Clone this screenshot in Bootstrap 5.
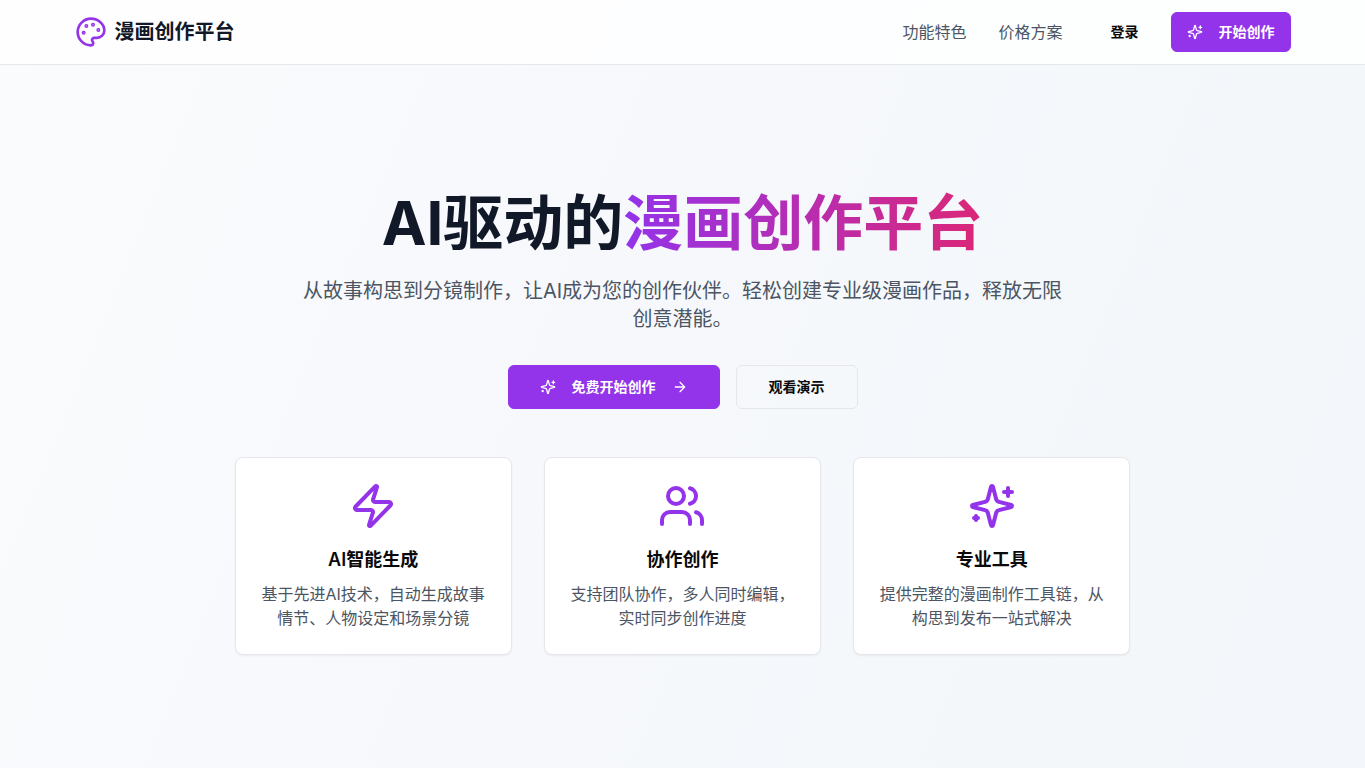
<!DOCTYPE html>
<html lang="zh-CN">
<head>
<meta charset="utf-8">
<meta name="viewport" content="width=device-width, initial-scale=1">
<title>漫画创作平台</title>
<link href="https://cdn.jsdelivr.net/npm/bootstrap@5.3.0/dist/css/bootstrap.min.css" rel="stylesheet">
<style>
  :root { --brand: #9333ea; --ink: #111827; --soft: #4b5563; --line: #e5e7eb; }
  body {
    font-family: Inter, "Noto Sans CJK SC", sans-serif;
    color: #0a0a0a;
    min-height: 100vh;
    background: linear-gradient(112deg, #fafbfc, #f6f8fc 45%, #f3f7fa 85%, #f3f6fa);
  }
  svg { fill: none; stroke: currentColor; stroke-width: 2; stroke-linecap: round; stroke-linejoin: round; flex-shrink: 0; }
  .wrap { max-width: 1280px; padding-left: 32px; padding-right: 32px; }
  .site-header { background: rgba(255, 255, 255, .8); border-bottom: 1px solid var(--line); }
  .site-bar { min-height: 64px; }
  .brand-icon, .feature-icon { color: var(--brand); }
  .brand-name { font-size: 20px; line-height: 28px; color: var(--ink); }
  .menu { gap: 32px; }
  .menu a { color: var(--soft); }
  .btn {
    --bs-btn-font-size: 14px; --bs-btn-line-height: 20px; --bs-btn-font-weight: 600;
    --bs-btn-padding-x: 16px; --bs-btn-padding-y: 9px; --bs-btn-border-radius: 6px; --bs-btn-color: #0a0a0a;
    display: inline-flex; align-items: center; justify-content: center; gap: 16px;
  }
  .btn-plain { --bs-btn-padding-x: 15px; }
  .btn-brand {
    --bs-btn-padding-x: 15px; --bs-btn-color: #fff; --bs-btn-bg: var(--brand); --bs-btn-border-color: var(--brand);
    --bs-btn-hover-color: #fff; --bs-btn-hover-bg: #7e22ce; --bs-btn-hover-border-color: #7e22ce;
  }
  .btn-frame { --bs-btn-border-color: var(--line); --bs-btn-hover-border-color: #d1d5db; }
  .hero-actions .btn { --bs-btn-padding-x: 32px; --bs-btn-padding-y: 11px; }
  .hero-actions .btn-brand { --bs-btn-padding-x: 31px; }
  .hero { padding-top: 128px; padding-bottom: 112px; }
  .hero-title { font-size: 60px; line-height: 60px; margin-bottom: 24px; color: var(--ink); }
  .hero-title span { background: linear-gradient(to right, #9333ea, #db2777); -webkit-background-clip: text; background-clip: text; color: transparent; }
  .hero-text { font-size: 20px; line-height: 28px; max-width: 768px; margin-bottom: 32px; color: var(--soft); }
  .features-box { max-width: 896px; margin-top: 48px; }
  .features { --bs-gutter-x: 32px; }
  .feature { border: 1px solid var(--line); border-radius: 8px; box-shadow: 0 1px 2px rgba(0, 0, 0, .05); color: inherit; }
  .feature-title { font-size: 18px; line-height: 28px; color: #0a0a0a; }
  .feature-text { color: var(--soft); }
</style>
</head>
<body>
<svg class="d-none" aria-hidden="true">
  <symbol id="sparkles" viewBox="0 0 24 24">
    <path d="M9.937 15.5A2 2 0 0 0 8.5 14.063l-6.135-1.582a.5.5 0 0 1 0-.962L8.5 9.936A2 2 0 0 0 9.937 8.5l1.582-6.135a.5.5 0 0 1 .963 0L14.063 8.5A2 2 0 0 0 15.5 9.937l6.135 1.581a.5.5 0 0 1 0 .964L15.5 14.063a2 2 0 0 0-1.437 1.437l-1.582 6.135a.5.5 0 0 1-.963 0z"/>
    <path d="M20 3v4M22 5h-4M4 17v2M5 18H3"/>
  </symbol>
</svg>
<header class="site-header">
  <div class="wrap mx-auto">
    <div class="site-bar d-flex flex-wrap align-items-center justify-content-between">
      <div class="d-flex align-items-center gap-2">
        <svg class="brand-icon" width="32" height="32" viewBox="0 0 24 24" aria-hidden="true">
          <circle cx="13.5" cy="6.5" r=".5" fill="currentColor"/>
          <circle cx="17.5" cy="10.5" r=".5" fill="currentColor"/>
          <circle cx="8.5" cy="7.5" r=".5" fill="currentColor"/>
          <circle cx="6.5" cy="12.5" r=".5" fill="currentColor"/>
          <path d="M12 2C6.5 2 2 6.5 2 12s4.5 10 10 10c.926 0 1.648-.746 1.648-1.688 0-.437-.18-.835-.437-1.125-.29-.289-.438-.652-.438-1.125a1.64 1.64 0 0 1 1.668-1.668h1.996c3.051 0 5.555-2.503 5.555-5.554C21.965 6.012 17.461 2 12 2z"/>
        </svg>
        <span class="brand-name fw-bold">漫画创作平台</span>
      </div>
      <nav class="menu d-flex flex-wrap align-items-center">
        <a class="text-decoration-none" href="#features">功能特色</a>
        <a class="text-decoration-none" href="#pricing">价格方案</a>
        <div class="d-flex gap-3">
          <button type="button" class="btn btn-plain">登录</button>
          <button type="button" class="btn btn-brand"><svg width="16" height="16" aria-hidden="true"><use href="#sparkles"/></svg>开始创作</button>
        </div>
      </nav>
    </div>
  </div>
</header>
<main class="hero wrap mx-auto text-center">
  <h1 class="hero-title fw-bold">AI驱动的<span>漫画创作平台</span></h1>
  <p class="hero-text mx-auto">从故事构思到分镜制作，让AI成为您的创作伙伴。轻松创建专业级漫画作品，释放无限创意潜能。</p>
  <div class="hero-actions d-flex flex-wrap justify-content-center gap-3">
    <button type="button" class="btn btn-brand"><svg width="16" height="16" aria-hidden="true"><use href="#sparkles"/></svg>免费开始创作<svg width="16" height="16" viewBox="0 0 24 24" aria-hidden="true"><path d="M5 12h14M12 5l7 7-7 7"/></svg></button>
    <button type="button" class="btn btn-frame">观看演示</button>
  </div>
  <div class="features-box mx-auto" id="features">
    <div class="features row row-cols-1 row-cols-md-3 gy-4 gy-md-0">
      <div class="col">
        <div class="feature card h-100 p-4 align-items-center">
          <svg class="feature-icon mb-3" width="48" height="48" viewBox="0 0 24 24" aria-hidden="true"><path d="M4 14a1 1 0 0 1-.78-1.63l9.9-10.2a.5.5 0 0 1 .86.46l-1.92 6.02A1 1 0 0 0 13 10h7a1 1 0 0 1 .78 1.63l-9.9 10.2a.5.5 0 0 1-.86-.46l1.92-6.02A1 1 0 0 0 11 14z"/></svg>
          <h2 class="feature-title fw-semibold mb-2">AI智能生成</h2>
          <p class="feature-text mb-0">基于先进AI技术，自动生成故事情节、人物设定和场景分镜</p>
        </div>
      </div>
      <div class="col">
        <div class="feature card h-100 p-4 align-items-center">
          <svg class="feature-icon mb-3" width="48" height="48" viewBox="0 0 24 24" aria-hidden="true"><path d="M16 21v-2a4 4 0 0 0-4-4H6a4 4 0 0 0-4 4v2"/><circle cx="9" cy="7" r="4"/><path d="M22 21v-2a4 4 0 0 0-3-3.87M16 3.13a4 4 0 0 1 0 7.75"/></svg>
          <h2 class="feature-title fw-semibold mb-2">协作创作</h2>
          <p class="feature-text mb-0">支持团队协作，多人同时编辑，实时同步创作进度</p>
        </div>
      </div>
      <div class="col">
        <div class="feature card h-100 p-4 align-items-center">
          <svg class="feature-icon mb-3" width="48" height="48" aria-hidden="true"><use href="#sparkles"/></svg>
          <h2 class="feature-title fw-semibold mb-2">专业工具</h2>
          <p class="feature-text mb-0">提供完整的漫画制作工具链，从构思到发布一站式解决</p>
        </div>
      </div>
    </div>
  </div>
</main>
<script src="https://cdn.jsdelivr.net/npm/bootstrap@5.3.0/dist/js/bootstrap.bundle.min.js"></script>
</body>
</html>
